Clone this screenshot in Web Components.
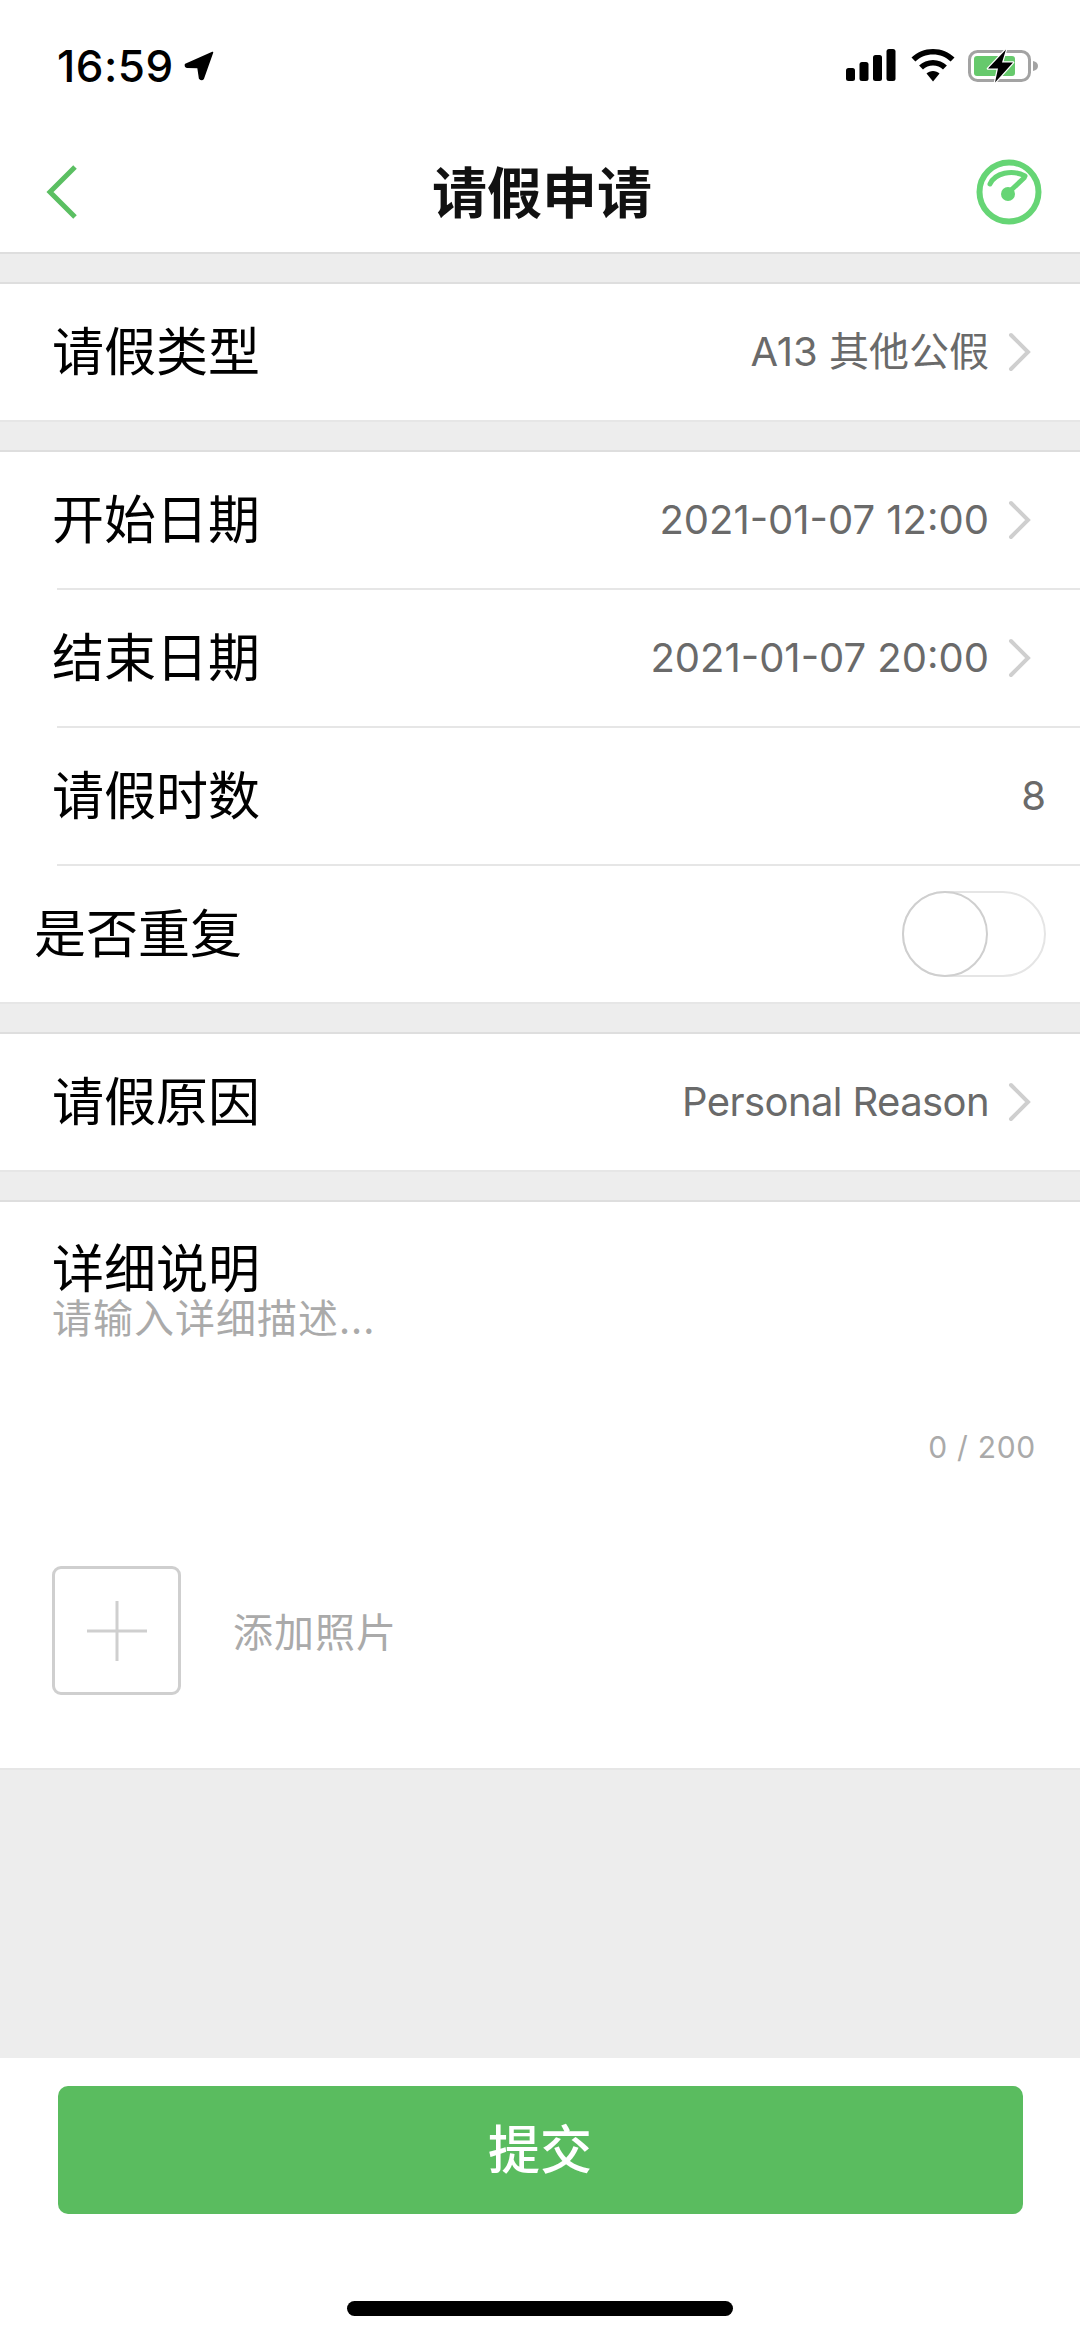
<!DOCTYPE html>
<html lang="zh-CN">
<head>
<meta charset="utf-8">
<title>请假申请</title>
<style>
    html, body {
        margin: 0;
        height: 2339px;
        background: #ededed;
        font-family: "Noto Sans CJK SC", "Noto Sans", sans-serif;
    }
    body {
        display: flex;
        flex-direction: column;
        width: 1080px;
        overflow: hidden;
    }
</style>
</head>
<body>
    <app-header title="请假申请"></app-header>

    <form-group>
        <form-row label="请假类型" value="A13 其他公假" chevron></form-row>
    </form-group>

    <form-group>
        <form-row label="开始日期" value="2021-01-07 12:00" chevron divider></form-row>
        <form-row label="结束日期" value="2021-01-07 20:00" chevron divider></form-row>
        <form-row label="请假时数" value="8" divider></form-row>
        <form-row label="是否重复" flush><toggle-switch></toggle-switch></form-row>
    </form-group>

    <form-group>
        <form-row label="请假原因" value="Personal Reason" chevron style="--value-spacing: -0.6px"></form-row>
    </form-group>

    <form-group>
        <detail-box></detail-box>
    </form-group>

    <submit-bar label="提交"></submit-bar>

<script>
const LATIN = '"Inter", "Noto Sans CJK SC", sans-serif';

class AppHeader extends HTMLElement {
    constructor() {
        super();
        this.attachShadow({ mode: 'open' });
        this.shadowRoot.innerHTML = `
            <style>
                :host {
                    display: block;
                    height: 254px;
                    box-sizing: border-box;
                    background: #fff;
                    border-bottom: 2px solid #dedede;
                }
                .status {
                    height: 132px;
                    box-sizing: border-box;
                    padding: 44px 41px 0 57px;
                    display: flex;
                    align-items: flex-start;
                }
                .time {
                    font: 500 44px/44px ${LATIN};
                    letter-spacing: 0.5px;
                    color: #000;
                }
                .arrow { margin: 7px 0 0 10px; }
                .right { margin-left: auto; display: flex; gap: 15px; align-items: flex-start; margin-top: 5px; }
                .wifi { margin-right: -2px; }
                .nav {
                    height: 120px;
                    display: grid;
                    grid-template-columns: 1fr auto 1fr;
                    align-items: center;
                    padding: 0 38px 0 42px;
                }
                .back { margin-left: 4px; }
                h1 {
                    margin: 0 0 6px;
                    font-size: 55px;
                    line-height: 64px;
                    font-weight: 700;
                    color: #111;
                }
                .gauge { justify-self: end; display: block; }
            </style>
            <div class="status">
                <span class="time">16:59</span>
                <svg class="arrow" width="30" height="30" viewBox="0 0 30 30"><path d="M28.5 1.5 L1.5 13.5 Q1 16 3 16.3 L14 16.6 L15.6 27.5 Q18 29.5 19.3 27.5 Z" fill="#000" stroke="#000" stroke-width="1.5" stroke-linejoin="round"/></svg>
                <div class="right">
                    <svg width="50" height="32" viewBox="0 0 50 32">
                        <rect x="0" y="19" width="9" height="13" rx="2.5" fill="#000"/>
                        <rect x="13.5" y="13" width="9" height="19" rx="2.5" fill="#000"/>
                        <rect x="27" y="6" width="9" height="26" rx="2.5" fill="#000"/>
                        <rect x="40.5" y="0" width="9" height="32" rx="2.5" fill="#000"/>
                    </svg>
                    <svg class="wifi" width="44" height="33" viewBox="0 0 44 33">
                        <path d="M22 0 C30.5 0 38 3.2 43.5 8.6 L39.6 12.6 C35 8.2 28.8 5.6 22 5.6 C15.2 5.6 9 8.2 4.4 12.6 L0.5 8.6 C6 3.2 13.5 0 22 0 Z" fill="#000"/>
                        <path d="M22 11 C27.4 11 32.3 13.1 35.9 16.5 L32 20.4 C29.4 18 25.9 16.6 22 16.6 C18.1 16.6 14.6 18 12 20.4 L8.1 16.5 C11.7 13.1 16.6 11 22 11 Z" fill="#000"/>
                        <path d="M22 22 C24.5 22 26.8 22.9 28.5 24.5 L22 32.5 L15.5 24.5 C17.2 22.9 19.5 22 22 22 Z" fill="#000"/>
                    </svg>
                    <svg width="71" height="34" viewBox="0 0 71 34">
                        <rect x="1.5" y="2.5" width="60" height="29" rx="8" fill="none" stroke="#a3a3a3" stroke-width="3"/>
                        <path d="M65 12 Q70 13 70 17 Q70 21 65 22 Z" fill="#a3a3a3"/>
                        <rect x="6" y="7" width="41" height="20" rx="3" fill="#66c96c"/>
                        <path d="M38 0.5 L20 19.5 L30 19.5 L27 33.5 L45 13.5 L34 13.5 Z" fill="#000" stroke="#fff" stroke-width="2.5" stroke-linejoin="round" paint-order="stroke"/>
                    </svg>
                </div>
            </div>
            <div class="nav">
                <svg class="back" width="32" height="56" viewBox="0 0 32 56"><path d="M29 3 L4 28 L29 53" fill="none" stroke="#5bbf62" stroke-width="5"/></svg>
                <h1>${this.getAttribute('title')}</h1>
                <svg class="gauge" width="66" height="66" viewBox="0 0 66 66">
                    <circle cx="33" cy="33" r="29.5" fill="none" stroke="#66d575" stroke-width="6"/>
                    <path d="M14 25 C19 14 36 10 49 17" fill="none" stroke="#66d575" stroke-width="5" stroke-linecap="round"/>
                    <path d="M32 34 L48 19" fill="none" stroke="#66d575" stroke-width="5" stroke-linecap="round"/>
                    <circle cx="32" cy="35" r="7" fill="#66d575"/>
                </svg>
            </div>
        `;
    }
}

class FormGroup extends HTMLElement {
    constructor() {
        super();
        this.attachShadow({ mode: 'open' });
        this.shadowRoot.innerHTML = `
            <style>
                :host {
                    display: block;
                    margin-top: 28px;
                    background: #fff;
                    border-top: 2px solid #dedede;
                    border-bottom: 2px solid #e6e6e6;
                }
            </style>
            <slot></slot>
        `;
    }
}

class FormRow extends HTMLElement {
    constructor() {
        super();
        this.attachShadow({ mode: 'open' });
        const value = this.getAttribute('value');
        const chevron = this.hasAttribute('chevron');
        this.shadowRoot.innerHTML = `
            <style>
                :host {
                    display: block;
                    height: 136px;
                }
                :host([divider]) { height: 138px; }
                .row {
                    height: 136px;
                    box-sizing: border-box;
                    display: flex;
                    align-items: center;
                    padding: 0 34px 0 52px;
                }
                :host([flush]) .row { padding-left: 34px; }
                .line {
                    height: 2px;
                    margin-left: 57px;
                    background: #e6e6e6;
                }
                .label {
                    font-size: 52px;
                    line-height: 64px;
                    margin-bottom: 6px;
                    color: #000;
                }
                .value {
                    margin-left: auto;
                    font-family: ${LATIN};
                    font-size: 40px;
                    line-height: 50px;
                    letter-spacing: var(--value-spacing, 0);
                    color: #6a6a6a;
                }
                .chev { margin: 0 15px 0 18px; flex: none; }
                ::slotted(*) { margin-left: auto; }
            </style>
            <div class="row">
                <span class="label">${this.getAttribute('label')}</span>
                ${value ? `<span class="value">${value}</span>` : ''}
                ${chevron ? `<svg class="chev" width="24" height="40" viewBox="0 0 24 40"><path d="M4 3 L21 20 L4 37" fill="none" stroke="#cfcfcf" stroke-width="4" stroke-linecap="round"/></svg>` : ''}
                <slot></slot>
            </div>
            ${this.hasAttribute('divider') ? '<div class="line"></div>' : ''}
        `;
    }
}

class ToggleSwitch extends HTMLElement {
    constructor() {
        super();
        this.attachShadow({ mode: 'open' });
        this.shadowRoot.innerHTML = `
            <style>
                :host {
                    display: block;
                    width: 144px;
                    height: 86px;
                    box-sizing: border-box;
                    border: 2px solid #e5e5e5;
                    border-radius: 43px;
                    position: relative;
                }
                .knob {
                    position: absolute;
                    left: -2px;
                    top: -2px;
                    width: 86px;
                    height: 86px;
                    box-sizing: border-box;
                    border: 2px solid #cfcfcf;
                    border-radius: 50%;
                    background: #fff;
                }
            </style>
            <div class="knob"></div>
        `;
    }
}

class DetailBox extends HTMLElement {
    constructor() {
        super();
        this.attachShadow({ mode: 'open' });
        this.shadowRoot.innerHTML = `
            <style>
                :host {
                    display: block;
                    height: 566px;
                    box-sizing: border-box;
                    padding: 36px 44px 0 52px;
                }
                .label {
                    font-size: 52px;
                    line-height: 56px;
                    color: #000;
                }
                .placeholder {
                    font-size: 40px;
                    line-height: 44px;
                    letter-spacing: 1px;
                    color: #aaa;
                }
                .count {
                    margin-top: 89px;
                    text-align: right;
                    font-family: ${LATIN};
                    font-size: 30px;
                    line-height: 40px;
                    letter-spacing: 0.7px;
                    color: #aaa;
                }
                .photo {
                    margin-top: 99px;
                    display: flex;
                    align-items: center;
                    gap: 52px;
                }
                .box {
                    width: 129px;
                    height: 129px;
                    box-sizing: border-box;
                    border: 3px solid #cfcfcf;
                    border-radius: 9px;
                    display: grid;
                    place-items: center;
                }
                .photo span {
                    font-size: 40px;
                    line-height: 50px;
                    letter-spacing: 1px;
                    margin-bottom: 2px;
                    color: #aaa;
                }
            </style>
            <div class="label">详细说明</div>
            <div class="placeholder">请输入详细描述...</div>
            <div class="count">0 / 200</div>
            <div class="photo">
                <div class="box">
                    <svg width="60" height="60" viewBox="0 0 60 60"><path d="M0 30 H60 M30 0 V60" stroke="#cfcfcf" stroke-width="3"/></svg>
                </div>
                <span>添加照片</span>
            </div>
        `;
    }
}

class SubmitBar extends HTMLElement {
    constructor() {
        super();
        this.attachShadow({ mode: 'open' });
        this.shadowRoot.innerHTML = `
            <style>
                :host {
                    display: flex;
                    flex-direction: column;
                    align-items: center;
                    margin-top: auto;
                    height: 281px;
                    box-sizing: border-box;
                    background: #fff;
                    padding-top: 28px;
                }
                button {
                    width: 965px;
                    height: 128px;
                    border: 0;
                    border-radius: 10px;
                    background: #5abc5f;
                    color: #fff;
                    font-family: inherit;
                    font-size: 52px;
                    font-weight: 500;
                    padding: 0 0 8px;
                }
                .home {
                    margin-top: 87px;
                    width: 386px;
                    height: 15px;
                    border-radius: 8px;
                    background: #000;
                }
            </style>
            <button>${this.getAttribute('label')}</button>
            <div class="home"></div>
        `;
    }
}

customElements.define('app-header', AppHeader);
customElements.define('form-group', FormGroup);
customElements.define('form-row', FormRow);
customElements.define('toggle-switch', ToggleSwitch);
customElements.define('detail-box', DetailBox);
customElements.define('submit-bar', SubmitBar);
</script>
</body>
</html>
